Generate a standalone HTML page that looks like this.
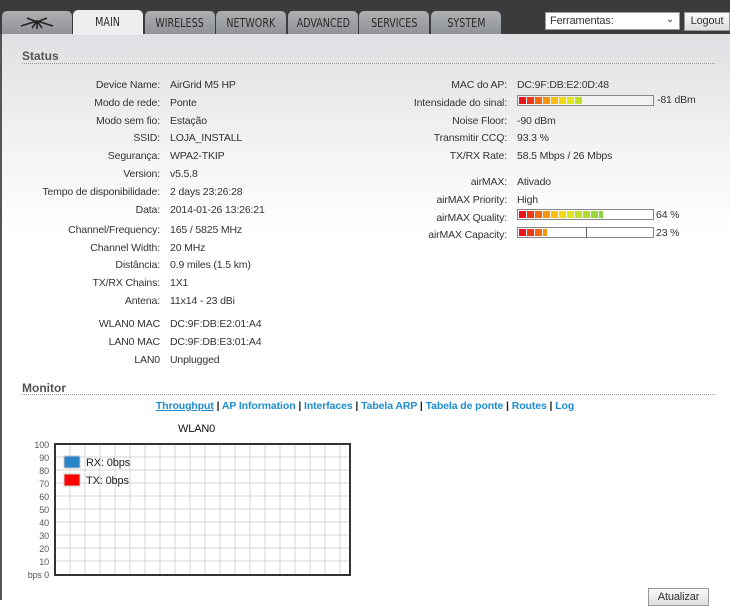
<!DOCTYPE html><html><head><style>
*{margin:0;padding:0;box-sizing:border-box}
body{width:730px;height:600px;overflow:hidden;font-family:"Liberation Sans",Arial,sans-serif;font-size:10.5px;letter-spacing:-0.15px;color:#333;position:relative;background:#fff}
.hdr{position:absolute;left:0;top:0;width:730px;height:34px;background:#3b3b3b}
.bg{position:absolute;left:0;top:34px;width:730px;height:566px;background:linear-gradient(#dfe0e3 0px,#f4f4f5 120px,#fff 200px);border-left:2px solid #555}
.tab{position:absolute;top:11px;height:23px;width:70px;background:linear-gradient(#aeb0b3,#8f9296);border-radius:5px 5px 0 0;color:#2a2a2a;text-align:center;line-height:24px;overflow:hidden}
.tab span{display:inline-block;font-family:"Liberation Sans Narrow","DejaVu Sans Condensed","Liberation Sans",sans-serif;font-size:12.5px;transform:scaleX(0.85);letter-spacing:0}
.tab.act{background:#eceef0;top:10px;height:25px}
.a{position:absolute;white-space:nowrap}
.r{position:absolute;text-align:right;white-space:nowrap}
h2{position:absolute;font-size:12px;color:#555;font-weight:bold;letter-spacing:0}
.dot{position:absolute;height:0;border-top:1px dotted #999}
.bar{position:absolute;height:11px;border:1px solid #888;background:#fff}
.seg{position:absolute;top:1px;height:7px;width:7px}
a{color:#1d8cd0;font-weight:bold;text-decoration:none}
.lnk{position:absolute;left:0;width:730px;top:400px;text-align:center;font-size:10.5px;color:#222;font-weight:bold;letter-spacing:-0.1px}
</style></head><body>
<div class="hdr"></div>
<div class="bg"></div>
<div class="tab" style="left:2px"><svg width="40" height="16" viewBox="0 0 40 16" style="margin-top:4px"><path d="M4 11 L20 6 L36 11 M10 3 L20 7 L30 3 M20 6 L15 13 M20 6 L25 13 M20 6 L20 14" stroke="#222" stroke-width="1.6" fill="none"/></svg></div>
<div class="tab act" style="left:73px"><span>MAIN</span></div>
<div class="tab" style="left:145px"><span>WIRELESS</span></div>
<div class="tab" style="left:216px"><span>NETWORK</span></div>
<div class="tab" style="left:288px"><span>ADVANCED</span></div>
<div class="tab" style="left:359px"><span>SERVICES</span></div>
<div class="tab" style="left:431px"><span>SYSTEM</span></div>
<div class="a" style="left:545px;top:12px;width:135px;height:18px;background:#fff;border:1px solid #999;padding:2px 4px;font-size:11px">Ferramentas:<span style="position:absolute;right:5px;top:1px;font-size:10px">&#8964;</span></div>
<div class="a" style="left:684px;top:12px;width:46px;height:19px;background:linear-gradient(#fafafa,#ddd);border:1px solid #999;text-align:center;line-height:17px;font-size:11px">Logout</div>
<h2 style="left:22px;top:49px">Status</h2>
<div class="dot" style="left:22px;top:63px;width:693px"></div>

<div class="r" style="left:0;width:160px;top:77px;line-height:17.8px">Device Name:<br>Modo de rede:<br>Modo sem fio:<br>SSID:<br>Segurança:<br>Version:<br>Tempo de disponibilidade:<br>Data:</div>
<div class="a" style="left:170px;top:77px;line-height:17.8px">AirGrid M5 HP<br>Ponte<br>Estação<br>LOJA_INSTALL<br>WPA2-TKIP<br>v5.5.8<br>2 days 23:26:28<br>2014-01-26 13:26:21</div>
<div class="r" style="left:0;width:160px;top:222px;line-height:17.7px">Channel/Frequency:<br>Channel Width:<br>Distância:<br>TX/RX Chains:<br>Antena:</div>
<div class="a" style="left:170px;top:222px;line-height:17.7px">165 / 5825 MHz<br>20 MHz<br>0.9 miles (1.5 km)<br>1X1<br>11x14 - 23 dBi</div>
<div class="r" style="left:0;width:160px;top:315px;line-height:18px">WLAN0 MAC<br>LAN0 MAC<br>LAN0</div>
<div class="a" style="left:170px;top:315px;line-height:18px">DC:9F:DB:E2:01:A4<br>DC:9F:DB:E3:01:A4<br>Unplugged</div>

<div class="r" style="left:300px;width:207px;top:77px;line-height:17.8px">MAC do AP:<br>Intensidade do sinal:<br>Noise Floor:<br>Transmitir CCQ:<br>TX/RX Rate:</div>
<div class="a" style="left:517px;top:77px;line-height:17.8px">DC:9F:DB:E2:0D:48<br>&nbsp;<br>-90 dBm<br>93.3 %<br>58.5 Mbps / 26 Mbps</div>
<div class="r" style="left:300px;width:207px;top:174px;line-height:17.8px">airMAX:<br>airMAX Priority:<br>airMAX Quality:<br>airMAX Capacity:</div>
<div class="a" style="left:517px;top:174px;line-height:17.8px">Ativado<br>High</div>
<div class="a" style="left:657px;top:94px">-81 dBm</div>
<div class="a" style="left:656px;top:209px">64 %</div>
<div class="a" style="left:656px;top:227px">23 %</div>

<div class="bar" style="left:517px;top:95px;width:137px;background:#f2f2f2">
<div class="seg" style="left:1px;background:#e8141a"></div><div class="seg" style="left:9px;background:#ee3a12"></div><div class="seg" style="left:17px;background:#f36a10"></div><div class="seg" style="left:25px;background:#f7950f"></div><div class="seg" style="left:33px;background:#f8bd10"></div><div class="seg" style="left:41px;background:#f3d914"></div><div class="seg" style="left:49px;background:#e0e41c"></div><div class="seg" style="left:57px;background:#c4df28"></div></div>
<div class="bar" style="left:517px;top:209px;width:137px">
<div class="seg" style="left:1px;background:#e8141a"></div><div class="seg" style="left:9px;background:#ee3a12"></div><div class="seg" style="left:17px;background:#f36a10"></div><div class="seg" style="left:25px;background:#f7950f"></div><div class="seg" style="left:33px;background:#f8bd10"></div><div class="seg" style="left:41px;background:#f3d914"></div><div class="seg" style="left:49px;background:#e0e41c"></div><div class="seg" style="left:57px;background:#c4df28"></div><div class="seg" style="left:65px;background:#addb30"></div><div class="seg" style="left:73px;background:#98d738"></div><div class="seg" style="left:81px;width:4px;background:#88d43c"></div></div>
<div class="bar" style="left:517px;top:227px;width:137px">
<div style="position:absolute;left:0;top:-1px;width:69px;height:11px;border-right:1px solid #666"></div>
<div class="seg" style="left:1px;background:#e8141a"></div><div class="seg" style="left:9px;background:#ee3a12"></div><div class="seg" style="left:17px;background:#f36a10"></div><div class="seg" style="left:25px;width:4px;background:#f7950f"></div></div>

<h2 style="left:22px;top:381px">Monitor</h2>
<div class="dot" style="left:22px;top:394px;width:693px"></div>
<div class="lnk"><a href="#" style="text-decoration:underline">Throughput</a> | <a href="#">AP Information</a> | <a href="#">Interfaces</a> | <a href="#">Tabela ARP</a> | <a href="#">Tabela de ponte</a> | <a href="#">Routes</a> | <a href="#">Log</a></div>
<div class="a" style="left:178px;top:423px;font-size:11px;color:#111">WLAN0</div>
<svg class="a" style="left:0;top:435px" width="360" height="150">
<g font-family="Liberation Sans,Arial" font-size="9" fill="#555" text-anchor="end">
<text x="49" y="13">100</text><text x="49" y="26">90</text><text x="49" y="39">80</text><text x="49" y="52">70</text><text x="49" y="65">60</text><text x="49" y="78">50</text><text x="49" y="91">40</text><text x="49" y="104">30</text><text x="49" y="117">20</text><text x="49" y="130">10</text><text x="49" y="143">bps 0</text></g>
<rect x="55" y="9" width="295" height="131" fill="#fff"/>
<g stroke="#d4d4d4" stroke-width="1">
<path d="M70 9V140M85 9V140M100 9V140M115 9V140M130 9V140M145 9V140M160 9V140M175 9V140M190 9V140M205 9V140M220 9V140M235 9V140M250 9V140M265 9V140M280 9V140M295 9V140M310 9V140M325 9V140M340 9V140"/>
<path d="M55 22H350M55 35H350M55 48H350M55 61H350M55 74H350M55 87H350M55 100H350M55 113H350M55 126H350"/>
</g>
<rect x="55" y="9" width="295" height="131" fill="none" stroke="#333" stroke-width="2"/>
<rect x="64" y="21" width="16" height="12" fill="#2a84c8" stroke="#ccc"/>
<rect x="64" y="39" width="16" height="12" fill="#f00" stroke="#ccc"/>
<text x="86" y="31" font-family="Liberation Sans,Arial" font-size="11" fill="#222">RX: 0bps</text>
<text x="86" y="49" font-family="Liberation Sans,Arial" font-size="11" fill="#222">TX: 0bps</text>
</svg>
<div class="a" style="left:648px;top:588px;width:61px;height:18px;background:linear-gradient(#fafafa,#ddd);border:1px solid #999;text-align:center;line-height:17px;font-size:11px">Atualizar</div>
</body></html>
